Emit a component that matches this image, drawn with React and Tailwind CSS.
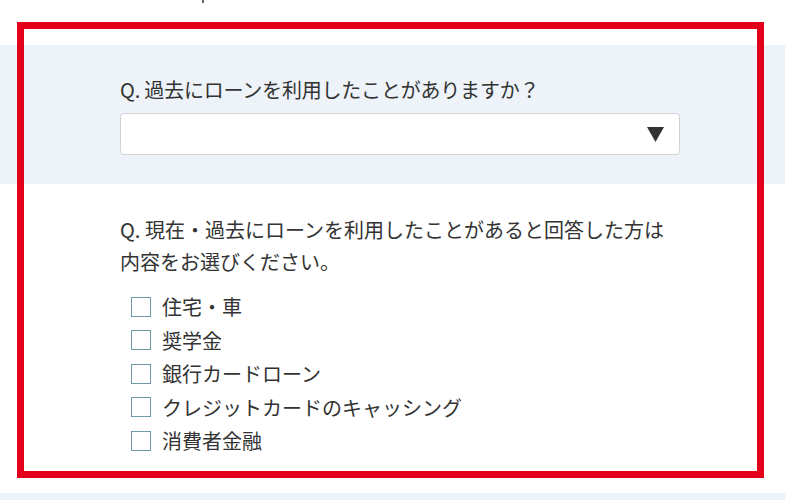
import React from 'react';

const loans = ['住宅・車', '奨学金', '銀行カードローン', 'クレジットカードのキャッシング', '消費者金融'];

const App = () => {
  return (
    <div className="relative w-[785px] h-[500px] overflow-hidden bg-white text-[#333] font-['Noto_Sans_CJK_JP','Noto_Sans',sans-serif]">
      {/* cut-off text from above */}
      <div className="h-[45px] pl-[202px]">
        <span className="block w-[2px] h-[3px] bg-[#666]"></span>
      </div>

      <section className="bg-[#edf3f9] pt-[31px] pb-[29px] px-[120px]">
        <p className="text-[20px] leading-[28px] tracking-[-0.2px]">Q. 過去にローンを利用したことがありますか？</p>
        <div className="mt-[9px] w-[560px] h-[42px] bg-white border border-[#cfd3d6] rounded-[4px] flex items-center justify-end pr-[15px]">
          <svg width="17" height="15" viewBox="0 0 17 15">
            <polygon points="0,0 17,0 8.5,15" fill="#333" />
          </svg>
        </div>
      </section>

      <section className="bg-white pt-[30px] pb-[35px] px-[120px] h-[309px]">
        <p className="text-[20px] leading-[32px]">
          Q. 現在・過去にローンを利用したことがあると回答した方は
          <br />
          内容をお選びください。
        </p>
        <ul className="mt-[12px]">
          {loans.map((item) => (
            <li key={item} className="flex items-center h-[33.5px] pl-[11px]">
              <span className="w-[20px] h-[20px] border border-[#7099a8] bg-white shrink-0"></span>
              <span className="ml-[11px] text-[20px] leading-[33px]">{item}</span>
            </li>
          ))}
        </ul>
      </section>

      <div className="h-[20px] bg-[#edf3f9]"></div>

      {/* highlight frame */}
      <div className="absolute left-[17px] top-[22px] w-[747px] h-[456px] border-[7px] border-[#e3001b] pointer-events-none"></div>
    </div>
  );
};

export default App;
